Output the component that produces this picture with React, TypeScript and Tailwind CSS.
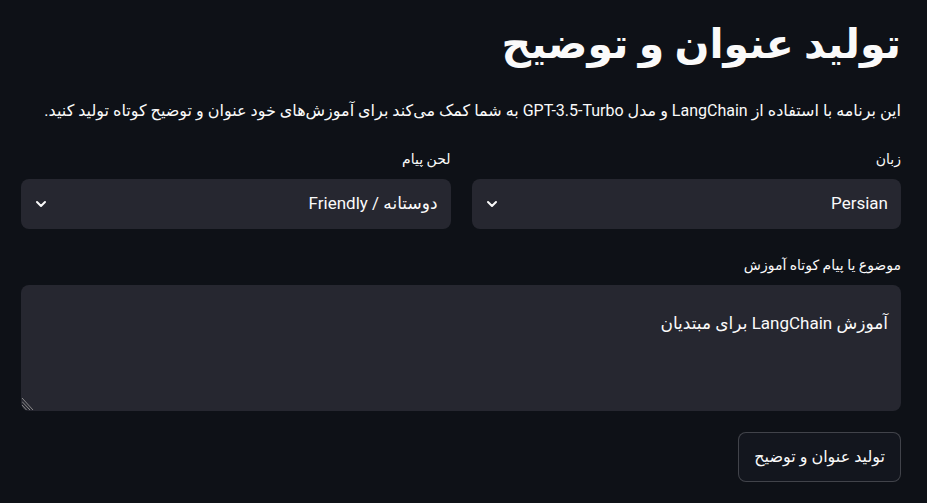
import { ChevronDown } from "lucide-react";

const font = { fontFamily: '"Source Sans Pro", Roboto, "DejaVu Sans", sans-serif' };

function Select({ label, value }: { label: string; value: string }) {
  return (
    <div className="flex flex-1 flex-col">
      <label className="mb-[10px] h-[20px] text-[14px] leading-[20px] text-[#fafafa]">{label}</label>
      <div className="flex h-[50px] shrink-0 items-center justify-between rounded-lg bg-[#262730] pl-[12px] pr-[13px]">
        <span className="text-[17px] text-[#fafafa]">{value}</span>
        <ChevronDown size={16} strokeWidth={3} className="text-[#fafafa]" />
      </div>
    </div>
  );
}

export default function App() {
  return (
    <div dir="rtl" className="min-h-[503px] bg-[#0e1117] pl-[21px] pr-[26px] text-[#fafafa]" style={font}>
      <h1 className="pt-[10px] text-[41px] font-bold leading-[68px] text-[#fafafa]">
        تولید عنوان و توضیح
      </h1>
      <p className="mt-[21px] text-[16px] leading-[24px] text-[#fafafa]">
        این برنامه با استفاده از LangChain و مدل GPT-3.5-Turbo به شما کمک می‌کند برای آموزش‌های خود عنوان و توضیح کوتاه تولید کنید.
      </p>
      <div className="mt-[26px] flex gap-[21px]">
        <Select label="زبان" value="Persian" />
        <Select label="لحن پیام" value="دوستانه / Friendly" />
      </div>
      <div className="mt-[26px] flex flex-col">
        <label className="mb-[10px] h-[20px] text-[14px] leading-[20px] text-[#fafafa]">موضوع یا پیام کوتاه آموزش</label>
        <div className="relative h-[126px] shrink-0 rounded-lg bg-[#262730] pr-[13px] pt-[26px]">
          <span className="text-[17px] text-[#fafafa]">آموزش LangChain برای مبتدیان</span>
          <svg className="absolute bottom-[1px] left-[1px]" width="12" height="14" viewBox="0 0 12 14">
            <path d="M0 2 L11 14 M0 5.5 L8 14 M0 9 L4.5 14" stroke="#8a8a8a" strokeWidth="1" />
          </svg>
        </div>
      </div>
      <div className="mt-[21px] flex">
        <button className="h-[50px] rounded-lg border border-[#fafafa33] bg-[#13161e] px-[15px] text-[16px] text-[#fafafa]">
          تولید عنوان و توضیح
        </button>
      </div>
    </div>
  );
}
